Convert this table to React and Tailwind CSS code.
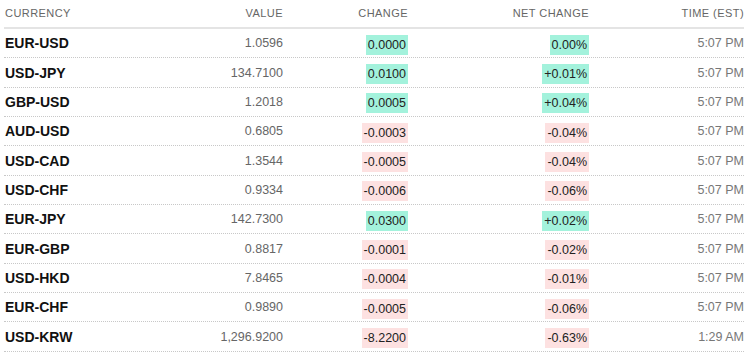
import React from "react";

const rows = [
  ["EUR-USD", "1.0596", "0.0000", "0.00%", "5:07 PM", true],
  ["USD-JPY", "134.7100", "0.0100", "+0.01%", "5:07 PM", true],
  ["GBP-USD", "1.2018", "0.0005", "+0.04%", "5:07 PM", true],
  ["AUD-USD", "0.6805", "-0.0003", "-0.04%", "5:07 PM", false],
  ["USD-CAD", "1.3544", "-0.0005", "-0.04%", "5:07 PM", false],
  ["USD-CHF", "0.9334", "-0.0006", "-0.06%", "5:07 PM", false],
  ["EUR-JPY", "142.7300", "0.0300", "+0.02%", "5:07 PM", true],
  ["EUR-GBP", "0.8817", "-0.0001", "-0.02%", "5:07 PM", false],
  ["USD-HKD", "7.8465", "-0.0004", "-0.01%", "5:07 PM", false],
  ["EUR-CHF", "0.9890", "-0.0005", "-0.06%", "5:07 PM", false],
  ["USD-KRW", "1,296.9200", "-8.2200", "-0.63%", "1:29 AM", false],
];

const Badge = ({ up, children }) => (
  <span
    className={`inline-block px-[2px] leading-[20px] text-[12.5px] text-[#222] ${
      up ? "bg-[#a3f2dc]" : "bg-[#fde1e1]"
    }`}
  >
    {children}
  </span>
);

const App = () => {
  return (
    <div
      className="w-[750px] h-[358px] bg-white pl-[4px] pr-[6px]"
      style={{ fontFamily: '"Liberation Sans", Arial, sans-serif' }}
    >
      <div className="flex items-end h-[29px] pb-[6px] border-b-2 border-[#e4e4e4] text-[11px] tracking-[0.04em] text-[#666] uppercase">
        <div className="w-[160px] pl-[1px]">Currency</div>
        <div className="w-[119px] text-right">Value</div>
        <div className="w-[125px] text-right">Change</div>
        <div className="w-[181px] text-right">Net Change</div>
        <div className="flex-1 text-right">Time (EST)</div>
      </div>
      {rows.map(([pair, value, change, net, time, up]) => (
        <div
          key={pair}
          className="flex items-center h-[29.35px] pt-[1px] border-b border-dotted border-[#c8c8c8]"
        >
          <div className="w-[160px] pl-[1px] text-[14px] font-bold text-[#111]">{pair}</div>
          <div className="w-[119px] text-right text-[12.5px] text-[#666]">{value}</div>
          <div className="w-[125px] text-right">
            <Badge up={up}>{change}</Badge>
          </div>
          <div className="w-[181px] text-right">
            <Badge up={up}>{net}</Badge>
          </div>
          <div className="flex-1 text-right text-[12.5px] text-[#777]">{time}</div>
        </div>
      ))}
    </div>
  );
};

export default App;
